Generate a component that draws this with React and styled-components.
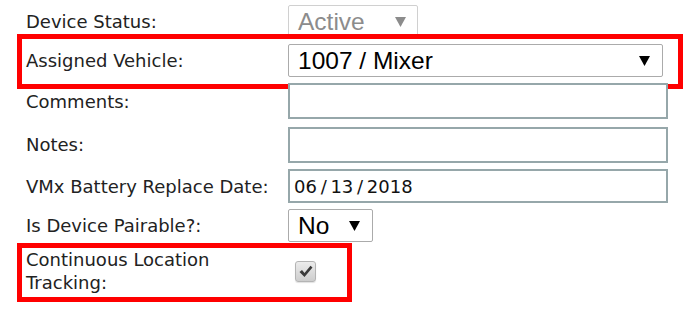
import React from "react";
import styled, { createGlobalStyle } from "styled-components";

const GlobalStyle = createGlobalStyle`
  body {
    margin: 0;
    background: #fff;
    font-family: "DejaVu Sans", Verdana, sans-serif;
  }
`;

const Form = styled.div`
  display: flex;
  flex-direction: column;
  gap: 6px;
  padding: 5px 0 16px 26px;
`;

const Row = styled.div`
  position: relative;
  display: grid;
  grid-template-columns: 262px auto;
  align-items: center;
  width: 642px;

  &::before {
    content: ${(p) => (p.$mark ? '""' : "none")};
    position: absolute;
    inset: ${(p) => p.$mark || "0"};
    border: 5px solid #ff0000;
    pointer-events: none;
  }
`;

const Label = styled.div`
  font-size: 18px;
  line-height: 23px;
  color: #222;
  padding-right: 8px;
`;

const Select = styled.div`
  box-sizing: border-box;
  display: flex;
  align-items: center;
  justify-content: space-between;
  width: ${(p) => p.$width}px;
  height: 33px;
  padding: 0 ${(p) => p.$arrowGap}px 0 9px;
  border: 1px solid ${(p) => (p.$disabled ? "#d0d0d0" : "#ababab")};
  border-radius: 2px;
  background: #fff;
  font-family: "Liberation Sans", Arial, sans-serif;
  font-size: 24.5px;
  color: ${(p) => (p.$disabled ? "#8c8c8c" : "#000")};
`;

const Arrow = ({ color }) => (
  <svg width="11" height="10" viewBox="0 0 11 10">
    <polygon points="0,0 11,0 5.5,10" fill={color} />
  </svg>
);

const TextBox = styled.input`
  box-sizing: border-box;
  width: 380px;
  height: ${(p) => p.$height}px;
  margin: ${(p) => p.$margin || "0"};
  border: 2px solid #96a7aa;
  padding: 0 4px;
  background: #fff;
  font-family: "DejaVu Sans", Verdana, sans-serif;
  font-size: 18px;
  word-spacing: -2px;
  color: #111;
  outline: none;
`;

const CheckBox = styled.span`
  box-sizing: border-box;
  display: inline-flex;
  align-items: center;
  justify-content: center;
  width: 21px;
  height: 21px;
  margin-left: 7px;
  border: 1px solid #b4b4b4;
  border-radius: 3px;
  background: linear-gradient(#ececec, #cdcdcd);
  box-shadow: 0 1px 1px rgba(0, 0, 0, 0.12);
`;

const Check = () => (
  <svg width="14" height="13" viewBox="0 0 14 13">
    <polygon points="0.5,7 3,5 5.5,8 11.5,0.8 13.5,2.6 5.5,12" fill="#3a3a3a" />
  </svg>
);

export default function App() {
  return (
    <>
      <GlobalStyle />
      <Form>
        <Row>
          <Label>Device Status:</Label>
          <Select $width={130} $arrowGap={11} $disabled>
            <span>Active</span>
            <Arrow color="#8c8c8c" />
          </Select>
        </Row>
        <Row $mark="-10px -15px -12px -9px">
          <Label>Assigned Vehicle:</Label>
          <Select $width={375} $arrowGap={12}>
            <span>1007 / Mixer</span>
            <Arrow color="#000" />
          </Select>
        </Row>
        <Row>
          <Label>Comments:</Label>
          <TextBox $height={36} readOnly defaultValue="" />
        </Row>
        <Row>
          <Label>Notes:</Label>
          <TextBox $height={36} $margin="2px 0 0" readOnly defaultValue="" />
        </Row>
        <Row>
          <Label>VMx Battery Replace Date:</Label>
          <TextBox $height={34} readOnly defaultValue="06 / 13 / 2018" />
        </Row>
        <Row>
          <Label>Is Device Pairable?:</Label>
          <Select $width={85} $arrowGap={12}>
            <span>No</span>
            <Arrow color="#000" />
          </Select>
        </Row>
        <Row $mark="-5px 316px -8px -9px">
          <Label>Continuous Location Tracking:</Label>
          <span>
            <CheckBox>
              <Check />
            </CheckBox>
          </span>
        </Row>
      </Form>
    </>
  );
}
